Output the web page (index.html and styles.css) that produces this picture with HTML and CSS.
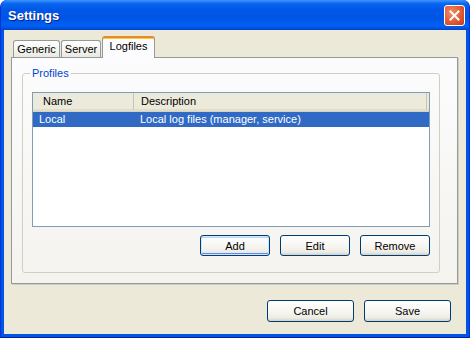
FILE: index.html
```html
<!DOCTYPE html>
<html lang="en">
  <head>
    <meta charset="UTF-8">
    <meta name="viewport" content="width=device-width, initial-scale=1.0">
    <title>Settings</title>
    <link rel="stylesheet" href="styles.css">
  </head>
  <body>
    <div class="window">
      <div class="titlebar">
        <span class="title">Settings</span>
        <button class="close-btn" aria-label="Close">
          <svg width="11" height="11" viewBox="0 0 11 11">
            <path d="M1.5 1.5 L9.5 9.5 M9.5 1.5 L1.5 9.5" stroke="#fff" stroke-width="2" stroke-linecap="square"/>
          </svg>
        </button>
      </div>
      <div class="client">
        <div class="tabs">
          <div class="tab tab-generic">Generic</div>
          <div class="tab tab-server">Server</div>
          <div class="tab tab-logfiles active">Logfiles</div>
        </div>
        <div class="tab-panel">
          <fieldset class="group">
            <legend>Profiles</legend>
            <div class="listview">
              <div class="list-header">
                <div class="col col-name">Name</div>
                <div class="col col-desc">Description</div>
                <div class="col col-rest"></div>
              </div>
              <div class="list-row selected">
                <div class="cell">Local</div>
                <div class="cell">Local log files (manager, service)</div>
              </div>
            </div>
            <div class="list-actions">
              <button class="btn btn-small default">Add</button>
              <button class="btn btn-small">Edit</button>
              <button class="btn btn-small">Remove</button>
            </div>
          </fieldset>
        </div>
        <div class="footer">
          <button class="btn btn-wide">Cancel</button>
          <button class="btn btn-wide">Save</button>
        </div>
      </div>
    </div>
  </body>
</html>
```

FILE: styles.css
```css
* {
    box-sizing: border-box;
}
body {
    margin: 0;
    background: #fff;
    font-family: "Liberation Sans", Arial, sans-serif;
    font-size: 11px;
    color: #000;
}
.window {
    width: 470px;
    height: 338px;
    display: flex;
    flex-direction: column;
    background: #0055e5;
    border: 1px solid #0831d9;
    border-top: none;
    border-bottom-color: #001ea0;
    border-radius: 7px 7px 0 0;
    overflow: hidden;
}
.titlebar {
    height: 30px;
    margin: 0 -1px;
    display: flex;
    align-items: center;
    justify-content: space-between;
    padding: 0 5px 0 8px;
    background: linear-gradient(#3d95ff 0%, #0a66f0 12%, #0058e8 30%, #0054e3 60%, #0060f5 85%, #0050dc 95%, #0040c8 100%);
    border-radius: 7px 7px 0 0;
}
.title {
    color: #fff;
    font-weight: bold;
    font-size: 13px;
    text-shadow: 1px 1px 0 #0a1e8c;
    padding-top: 1px;
}
.close-btn {
    width: 21px;
    height: 21px;
    padding: 0;
    display: flex;
    align-items: center;
    justify-content: center;
    border: 1px solid #fff;
    border-radius: 3px;
    background: radial-gradient(circle at 35% 35%, #f08c6c 0%, #e35a32 55%, #c0391a 100%);
    margin-top: 1px;
}
.client {
    flex: 1;
    margin: 0 3px 3px;
    background: #ece9d8;
    padding-top: 6px;
    display: flex;
    flex-direction: column;
}
.tabs {
    display: flex;
    align-items: flex-end;
    gap: 1px;
    margin-left: 9px;
    height: 21px;
    position: relative;
    z-index: 1;
}
.tab {
    height: 17px;
    border: 1px solid #919b9c;
    border-bottom: none;
    border-radius: 3px 3px 0 0;
    background: linear-gradient(#fefefe, #f4f3ee 60%, #e9e8e0);
    text-align: center;
    line-height: 16px;
}
.tab-generic { width: 47px; }
.tab-server { width: 40px; }
.tab-logfiles { width: 53px; }
.tab.active {
    height: 22px;
    margin-bottom: -1px;
    background: #fcfcfe;
    border-top: 2px solid #e68b2c;
    box-shadow: inset 0 1px 0 #ffc73c;
    line-height: 17px;
}
.tab-panel {
    width: 447px;
    height: 227px;
    margin-left: 7px;
    border: 1px solid #919b9c;
    box-shadow: 1px 1px 0 #d0cec0;
    background: linear-gradient(#fcfcfe, #f4f3ee);
    padding: 9px 0 0 10px;
}
.group {
    width: 418px;
    height: 206px;
    margin: 0;
    padding: 0 9px 0 9px;
    border: 1px solid #d0d0bf;
    border-radius: 3px;
    min-width: 0;
}
.group legend {
    color: #0046d5;
    padding: 0 2px;
    margin-left: -2px;
    line-height: 13px;
}
.listview {
    margin-top: 12px;
    height: 135px;
    border: 1px solid #7f9db9;
    background: #fff;
}
.list-header {
    display: grid;
    grid-template-columns: 101px 293px 1fr;
    height: 19px;
    background: #ebeadb;
    border-bottom: 1px solid #d6d2c2;
    box-shadow: inset 0 -2px 0 #e2decd;
}
.col {
    line-height: 17px;
    height: 17px;
}
.col-name {
    padding-left: 10px;
    border-right: 1px solid #c7c5b2;
    background-clip: padding-box;
}
.col-desc {
    padding-left: 7px;
    border-right: 1px solid #c7c5b2;
}
.list-row {
    display: grid;
    grid-template-columns: 101px 1fr;
    height: 15px;
    line-height: 14px;
}
.list-row .cell {
    padding-left: 6px;
}
.list-row.selected {
    background: #316ac5;
    color: #fff;
}
.list-actions {
    display: flex;
    justify-content: flex-end;
    gap: 10px;
    margin-top: 8px;
}
.btn {
    font-family: "Liberation Sans", Arial, sans-serif;
    font-size: 11px;
    color: #000;
    border: 1px solid #003c74;
    border-radius: 3px;
    background: linear-gradient(#ffffff, #f5f4ef 60%, #ecebe4 85%, #d6d0c5);
    padding: 0;
}
.btn-small {
    width: 70px;
    height: 21px;
}
.btn.default {
    box-shadow: inset 0 0 0 1px #cee7ff, inset 0 -1px 0 1px #6982ee, inset 0 1px 0 1px #bcd4f6;
}
.footer {
    display: flex;
    justify-content: flex-end;
    gap: 10px;
    padding-right: 15px;
    margin-top: 16px;
}
.btn-wide {
    width: 87px;
    height: 22px;
}
```
